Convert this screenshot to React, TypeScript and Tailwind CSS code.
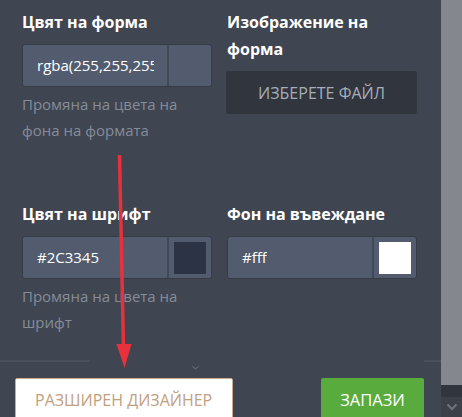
import React from "react";

const font = { fontFamily: '"Open Sans", "Noto Sans", sans-serif' };

function ColorInput({ value, swatch }: { value: string; swatch?: string }) {
  return (
    <div className="flex h-[43px] w-[190px] rounded-[3px] border border-[#363c46] bg-[#525c6e] overflow-hidden">
      <div className="flex-1 min-w-0 flex items-center pl-[14px] pr-[13px] text-[15px] text-white whitespace-nowrap overflow-hidden">
        <span className="overflow-hidden">{value}</span>
      </div>
      <div className="w-[44px] border-l-2 border-[#414856] flex items-center justify-center">
        {swatch ? <div className="w-[32px] h-[32px]" style={{ background: swatch }} /> : null}
      </div>
    </div>
  );
}

export default function App() {
  return (
    <div className="relative w-[462px] h-[417px] flex overflow-hidden bg-[#3f4551]" style={font}>
      <div className="w-[441px] h-full flex flex-col bg-[#3f4551]">
        {/* section 1 */}
        <div className="grid grid-cols-[190px_190px] gap-x-[15px] pl-[22px] pt-[9px] pb-[21px]">
          <div className="flex flex-col">
            <div className="text-[16px] leading-[27px] font-bold text-white">Цвят на форма</div>
            <div className="mt-[8px]">
              <ColorInput value="rgba(255,255,255" />
            </div>
            <div className="mt-[4px] text-[15px] leading-[26px] text-[#858c98]">
              Промяна на цвета на
              <br />
              фона на формата
            </div>
          </div>
          <div className="flex flex-col">
            <div className="text-[16px] leading-[27px] font-bold text-white">
              Изображение на
              <br />
              форма
            </div>
            <div className="mt-[8px] -ml-[1px] h-[43px] w-[191px] rounded-[3px] bg-[#30353e] flex items-center justify-center text-[16px] text-[#a7aeb8]">
              ИЗБЕРЕТЕ ФАЙЛ
            </div>
          </div>
        </div>
        <div className="h-[1px] bg-[#30353e]" />
        <div className="h-[1px] bg-[#4a505c]" />
        {/* section 2 */}
        <div className="grid grid-cols-[190px_190px] gap-x-[15px] pl-[22px] pt-[37px]">
          <div className="flex flex-col">
            <div className="text-[16px] leading-[27px] font-bold text-white">Цвят на шрифт</div>
            <div className="mt-[8px]">
              <ColorInput value="#2C3345" swatch="#2c3345" />
            </div>
            <div className="mt-[4px] text-[15px] leading-[26px] text-[#858c98]">
              Промяна на цвета на
              <br />
              шрифт
            </div>
          </div>
          <div className="flex flex-col">
            <div className="text-[16px] leading-[27px] font-bold text-white">Фон на въвеждане</div>
            <div className="mt-[8px]">
              <ColorInput value="#fff" swatch="#ffffff" />
            </div>
          </div>
        </div>
        {/* footer */}
        <div className="mt-[25px] flex items-start h-[2px]">
          <div className="w-[90px] h-[2px] bg-[#4a505c]" />
          <div className="flex-1" />
          <div className="w-[17px] h-[2px] bg-[#4a505c]" />
        </div>
        <div className="relative flex-1 flex justify-between pl-[15px] pr-[17px] pt-[16px]">
          <svg className="absolute left-[192px] top-[4px]" width="7" height="4" viewBox="0 0 7 4">
            <path d="M0.5 0.5 L3.5 3 L6.5 0.5" stroke="#6f7580" strokeWidth="1" fill="none" />
          </svg>
          <div className="w-[218px] h-[44px] shrink-0 bg-white border border-[#c9ad8e] flex items-center pl-[19px] text-[16px] text-[#c2a07f] rounded-[2px] whitespace-nowrap">
            РАЗШИРЕН ДИЗАЙНЕР
          </div>
          <div className="w-[103px] h-[44px] shrink-0 bg-[#59ab3e] flex items-center justify-center text-[16.5px] text-white rounded-[2px]">
            ЗАПАЗИ
          </div>
        </div>
      </div>
      {/* scrollbar */}
      <div className="w-[21px] h-full flex flex-col">
        <div className="flex-1 bg-[#85878e]" />
        <div className="h-[12px] bg-[#30353e]" />
        <div className="h-[20px] bg-[#3b4049] flex items-center justify-center">
          <svg width="12" height="8" viewBox="0 0 12 8">
            <path d="M1.5 1.5 L6 6 L10.5 1.5" stroke="#6e747e" strokeWidth="2" fill="none" />
          </svg>
        </div>
      </div>
      {/* red arrow annotation */}
      <svg className="absolute left-0 top-0 pointer-events-none" width="462" height="417" viewBox="0 0 462 417">
        <line x1="119.5" y1="155" x2="123.5" y2="350" stroke="#e8313a" strokeWidth="3.5" />
        <polygon points="116.5,344 131.5,344 124.5,368" fill="#e8313a" />
      </svg>
    </div>
  );
}
